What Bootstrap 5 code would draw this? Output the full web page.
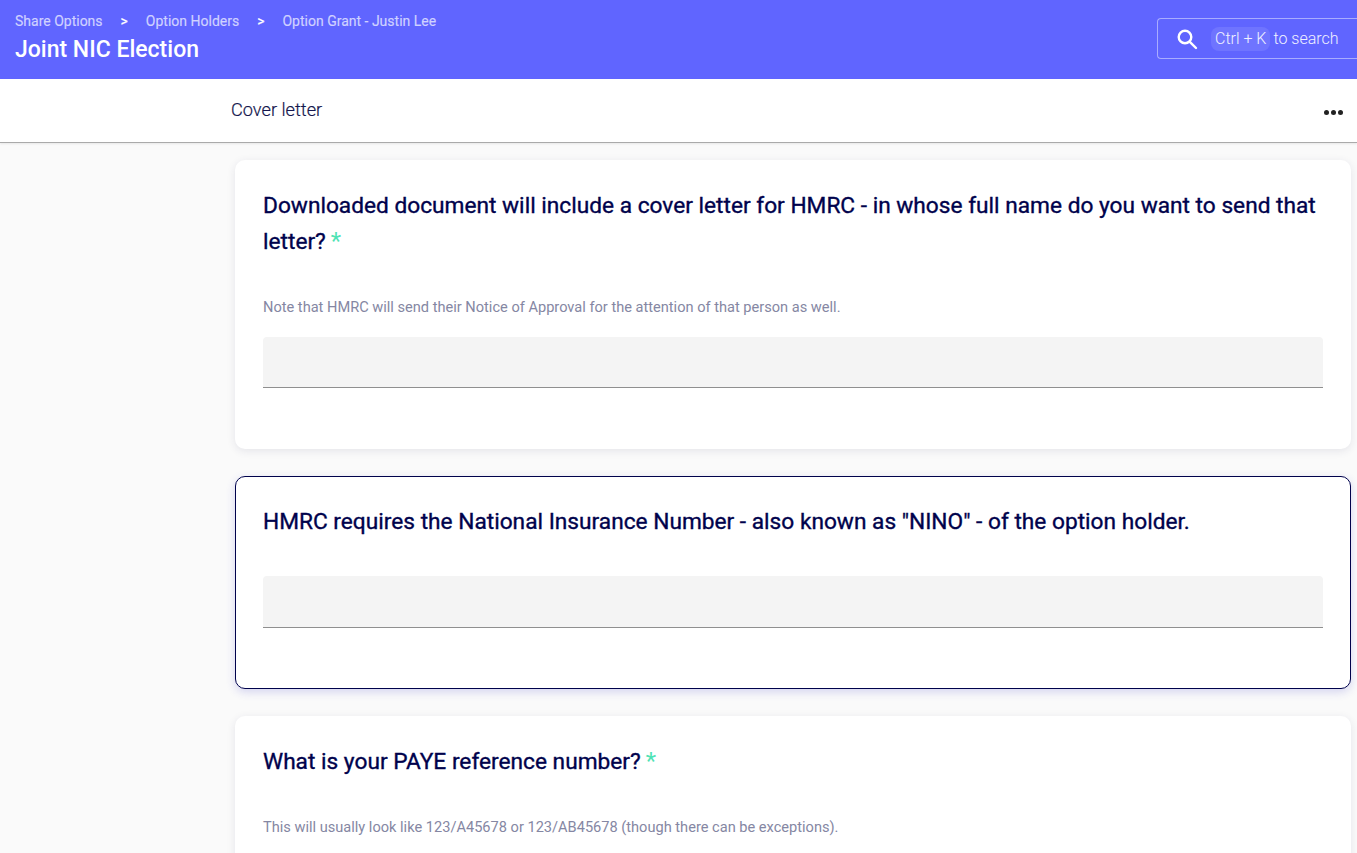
<!DOCTYPE html>
<html lang="en">
<head>
<meta charset="utf-8">
<title>Joint NIC Election</title>
<link rel="stylesheet" href="https://cdn.jsdelivr.net/npm/bootstrap@5.3.0/dist/css/bootstrap.min.css">
<style>
html,body{height:853px;overflow:hidden}
body{font-family:Roboto,"Liberation Sans",sans-serif;background:#fafafa;color:#00024c}
.topbar{background:#6065ff;height:79px;padding:12px 0 0 15px}
.crumbs{font-size:14px;line-height:19px;color:#d0d2ff;font-weight:400;-webkit-text-stroke:.15px #d0d2ff}
.crumbs .sep{color:#fff;margin:0 18px;font-weight:500}
.page-name{font-size:23px;line-height:34px;font-weight:500;color:#fff;margin:2px 0 0}
.searcher{width:200px;height:41px;margin-top:6px;border:1px solid #a9acff;border-right:0;border-radius:4px 0 0 4px;color:#f0f1ff;font-size:16px;font-weight:300;padding-left:19px}
.searcher svg{flex:none;margin-right:12px;margin-left:-1px}
.keys{background:#6f74ff;border-radius:8px;padding:0 4px;height:24px;line-height:24px;margin-right:3px;white-space:nowrap;margin-left:1px}
.tabbar{background:#fff;height:64px;border-bottom:1px solid #aaa;box-shadow:0 1px 2px rgba(0,0,0,.08);padding:0 14px 0 231px}
.tabname{font-size:18.2px;font-weight:300;color:#14164d;margin-top:-1px;-webkit-text-stroke:.2px #14164d}
.dots{gap:2px;margin-top:3px}
.dots i{width:5px;height:5px;border-radius:50%;background:#222;display:block}
.questions{padding:17px 6px 0 235px}
.qcard{background:#fff;border-radius:10px;border:1px solid transparent;box-shadow:0 2px 8px rgba(40,40,90,.1);padding:27px 27px 0;margin-bottom:27px}
.qcard.active-q{border-color:#00024c;box-shadow:0 3px 10px rgba(60,60,200,.2)}
.qcard h2{font-size:22.7px;line-height:36px;font-weight:400;color:#00024c;margin:0;-webkit-text-stroke:.35px #00024c}
.req{color:#4fe3b5;font-size:24px;line-height:1;font-weight:400;margin-left:5px;-webkit-text-stroke:0}
.hint{font-size:14.6px;line-height:20px;color:#8587a3;margin:0}
.fake-input{display:block;width:100%;height:51px;background:#f4f4f4;border:0;border-bottom:1px solid #8f8f8f;border-radius:4px 4px 0 0}
.q1{height:289px}.q1 .hint{margin-top:37px}.q1 .fake-input{margin-top:20px}
.q2{height:213px}.q2 .fake-input{margin-top:36px;height:52px}
.q3{height:300px}.q3 .hint{margin-top:37px}
</style>
</head>
<body>
<header class="topbar d-flex justify-content-between align-items-start">
  <div>
    <div class="crumbs"><span>Share Options</span><span class="sep">&gt;</span><span>Option Holders</span><span class="sep">&gt;</span><span>Option Grant - Justin Lee</span></div>
    <h1 class="page-name">Joint NIC Election</h1>
  </div>
  <div class="searcher d-flex align-items-center">
    <svg width="22" height="22" viewBox="0 0 22 22" fill="none" stroke="#fff" stroke-width="2.4" stroke-linecap="round"><circle cx="9" cy="9" r="6.3"/><path d="M13.8 13.8 20 20"/></svg>
    <span class="keys">Ctrl + K</span><span class="text-nowrap">to search</span>
  </div>
</header>
<nav class="tabbar d-flex justify-content-between align-items-center">
  <span class="tabname">Cover letter</span>
  <span class="dots d-flex"><i></i><i></i><i></i></span>
</nav>
<main class="questions">
  <section class="qcard q1">
    <h2>Downloaded document will include a cover letter for HMRC - in whose full name do you want to send that letter?<span class="req">*</span></h2>
    <p class="hint">Note that HMRC will send their Notice of Approval for the attention of that person as well.</p>
    <div class="fake-input"></div>
  </section>
  <section class="qcard q2 active-q">
    <h2>HMRC requires the National Insurance Number - also known as "NINO" - of the option holder.</h2>
    <div class="fake-input"></div>
  </section>
  <section class="qcard q3">
    <h2>What is your PAYE reference number?<span class="req">*</span></h2>
    <p class="hint">This will usually look like 123/A45678 or 123/AB45678 (though there can be exceptions).</p>
  </section>
</main>
<script src="https://cdn.jsdelivr.net/npm/bootstrap@5.3.0/dist/js/bootstrap.bundle.min.js"></script>
</body>
</html>
